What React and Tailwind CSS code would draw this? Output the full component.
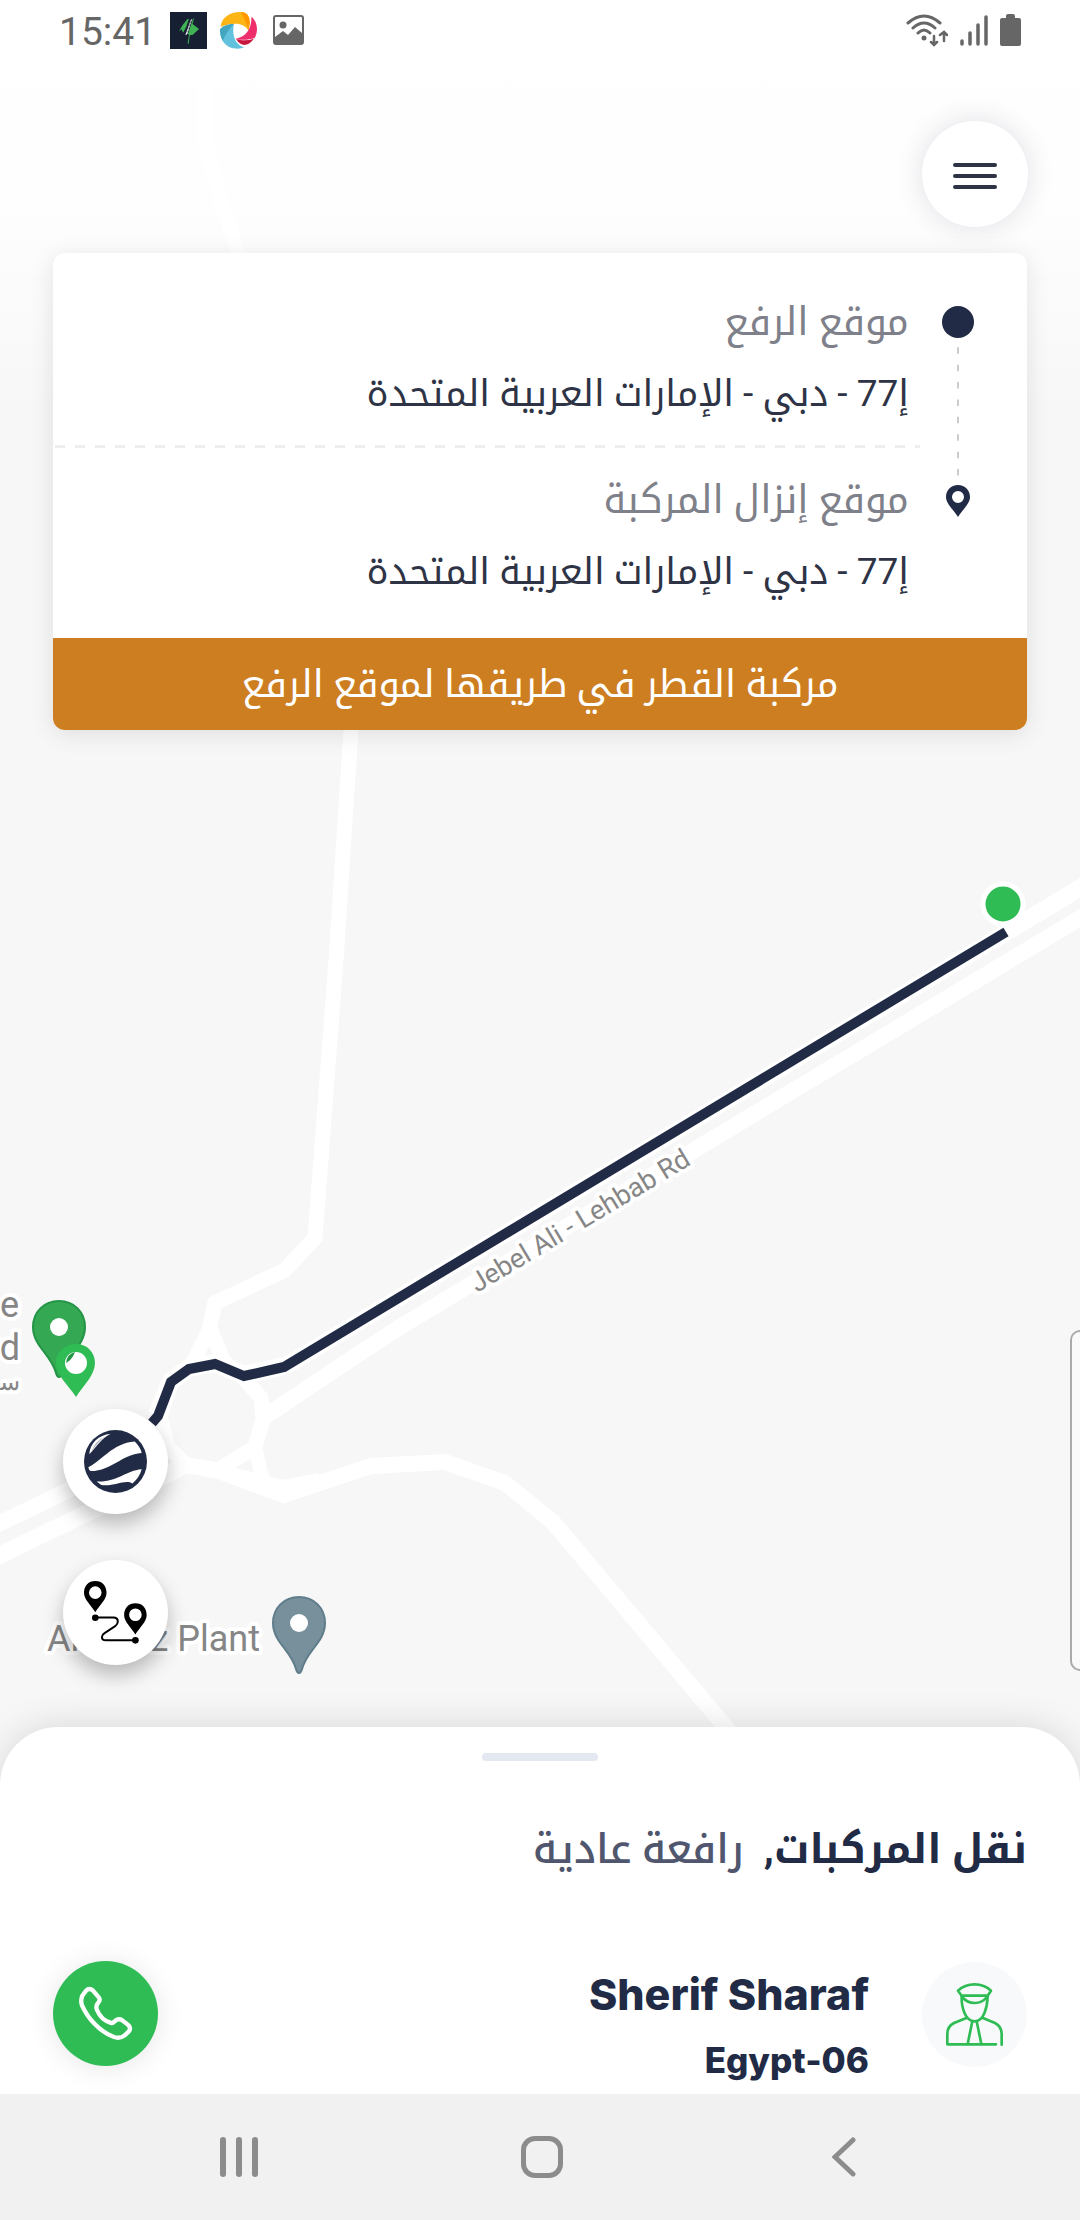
const ADDRESS = 'إ77 - دبي - الإمارات العربية المتحدة';

function MapPin({ x, y, fill, stroke }) {
  return (
    <g transform={`translate(${x} ${y})`}>
      <path
        d="M0 -26 C15 -26 26 -15 26 0 C26 19 8 27 3 46 Q2 50 0 50 Q-2 50 -3 46 C-8 27 -26 19 -26 0 C-26 -15 -15 -26 0 -26 Z"
        fill={fill}
        stroke={stroke}
        strokeWidth="2"
      />
      <circle r="9" fill="#fff" />
    </g>
  );
}

function MapCanvas() {
  return (
    <svg
      className="absolute inset-0 h-full w-full bg-[#f7f7f7] [font-family:Roboto,sans-serif]"
      viewBox="0 0 1080 2094"
      preserveAspectRatio="xMinYMin slice"
      aria-label="Map"
    >
      <g fill="none" stroke="#fff" strokeWidth="15">
        <path d="M204 60 V133 L217 187 L238 253 L345 520 L351 730 L336 960 L315 1238 L285 1270 L215 1303 L209 1330 L190 1368" />
        <path d="M210 1328 L224 1362 L243 1377 L261 1398 L263 1420 L255 1447 L218 1470 L186 1465 L168 1447 L160 1417 L171 1382 L189 1369" />
        <path d="M255 1447 L262 1477" strokeWidth="14" />
        <path d="M180 1464 L219 1471 L284 1495 L371 1466 L445 1462 L505 1483 L553 1522 L740 1744" strokeWidth="16" />
        <path d="M219 1471 L283 1487 L320 1480" strokeWidth="14" />
        <path d="M263 1418 L360 1353 L400 1327 L1090 912" strokeWidth="16" />
        <path d="M1090 882 L284 1367" strokeWidth="17" />
        <path d="M284 1366 L244 1375 L215 1363 L189 1368 L171 1381 L157 1415" strokeWidth="18" />
        <path d="M-6 1526 L67 1491 L150 1442 L162 1425" strokeWidth="16" />
        <path d="M-6 1558 L83 1515 L180 1468 L190 1462" strokeWidth="17" />
      </g>
      <path
        d="M1006 932 L284 1367 L244 1376 L215 1364 L189 1369 L171 1382 L158 1416 L152 1423"
        fill="none"
        stroke="#222b45"
        strokeWidth="10"
      />
      <circle cx="1003" cy="904" r="20" fill="#2fbc54" stroke="#fff" strokeWidth="5" />

      <g fill="#868686" stroke="#fff" strokeWidth="8" strokeLinejoin="round" paintOrder="stroke">
        <text fontSize="27" transform="translate(477 1293) rotate(-31)">
          Jebel Ali - Lehbab Rd
        </text>
        <g fontSize="36">
          <text x="19" y="1317" textAnchor="end">e</text>
          <text x="20" y="1360" textAnchor="end">rd</text>
          <text x="20" y="1390" fontSize="24" textAnchor="end">ﺳ</text>
          <text x="47" y="1651">Al</text>
          <text x="260" y="1651" textAnchor="end">z Plant</text>
        </g>
      </g>

      <MapPin x={59} y={1327} fill="#34a853" stroke="#249447" />
      <MapPin x={299} y={1623} fill="#78909c" stroke="#607d8b" />
      <path
        d="M76 1344 C87 1344 95 1352 95 1363 C95 1375 83 1386 76 1397 C69 1386 56 1375 56 1363 C56 1352 65 1344 76 1344 Z"
        fill="#2fbc54"
      />
      <circle cx="76" cy="1363" r="11" fill="#fff" />
      <path d="M66 1363 Q67 1354 75 1352 Q72 1360 66 1363 Z" fill="#249447" />
    </svg>
  );
}

function StatusBar() {
  return (
    <header className="flex h-16 items-center px-[59px] pb-1 text-[#666]">
      <span className="pt-1 text-[39px] leading-[48px]">15:41</span>
      <div className="ml-[14px] flex items-center gap-[13px]">
        <svg className="h-[37px] w-[37px]" viewBox="0 0 107 111" preserveAspectRatio="none" aria-hidden="true">
          <path d="M0 0H107V111H0Z" fill="#172033" />
          <path d="M55 20 L47 44 L38 62 L33 52 L26 58 L36 40 L50 22 Z M70 18 L65 36 L84 51 L66 68 L57 70 L54 96 L51 94 L55 68 L52 66 L66 22 Z" fill="#3fb354" />
          <path d="M64 20 L50 66 L44 70 L60 24 Z" fill="#fff" />
          <path d="M60 28 L48 62" stroke="#172033" strokeWidth="2" strokeDasharray="5 5" />
        </svg>
        <svg className="h-[37px] w-[37px]" viewBox="0 0 107 111" preserveAspectRatio="none" aria-hidden="true">
          <path d="M2 44 C4 12 40 -6 72 2 C90 10 88 36 82 55 C70 34 44 28 2 44 Z" fill="#fdb515" />
          <path d="M60 0 C90 0 88 36 82 55 C78 34 70 20 60 0 Z" fill="#ff9800" />
          <path d="M91 14 C108 28 112 58 100 78 C84 84 60 86 46 80 C72 76 92 54 91 14 Z" fill="#ee2f6c" />
          <path d="M46 80 C60 104 80 106 98 80 C80 86 62 86 46 80 Z" fill="#c8173f" />
          <path d="M0 52 C10 40 26 36 40 36 C34 70 44 98 70 106 C50 116 0 112 0 52 Z" fill="#62c1dc" />
          <path d="M0 52 C10 40 26 36 40 36 C30 46 20 60 8 86 C2 76 0 64 0 52 Z" fill="#42a6c0" />
        </svg>
        <svg className="ml-[3px] h-[30px] w-[31px]" viewBox="0 0 31 30" aria-hidden="true">
          <rect x="1" y="1" width="29" height="28" rx="2" fill="none" stroke="#666" strokeWidth="2" />
          <circle cx="10" cy="10" r="3.5" fill="#666" />
          <path d="M2 22 L10 16 L15 20 L22 12 L29 18 V29 H2 Z" fill="#666" />
        </svg>
      </div>
      <div className="ml-auto flex items-center gap-3">
        <svg className="h-[33px] w-[42px]" viewBox="0 0 42 33" fill="none" stroke="#666" strokeWidth="3" strokeLinecap="round" aria-hidden="true">
          <path d="M2 9 Q18 -5 34 9 M7 14 Q18 4 29 14 M12 19 Q18 13 24 19" />
          <circle cx="18" cy="24" r="2.5" fill="#666" stroke="none" />
          <path d="M28 22 V30 M25 28 L28 31 L31 28 M38 27 V19 M34 21 L38 18 L41 21" strokeWidth="2.5" />
        </svg>
        <svg className="h-[31px] w-[28px]" viewBox="0 0 28 31" stroke="#666" strokeWidth="3.5" strokeLinecap="round" aria-hidden="true">
          <path d="M2 26 V29 M10 18 V29 M18 10 V29 M26 2 V29" />
        </svg>
        <svg className="h-[32px] w-[21px]" viewBox="0 0 21 32" fill="#666" aria-hidden="true">
          <path d="M6 2 Q6 0 8 0 H13 Q15 0 15 2 V4 H19 Q21 4 21 6 V30 Q21 32 19 32 H2 Q0 32 0 30 V6 Q0 4 2 4 H6 Z" />
        </svg>
      </div>
    </header>
  );
}

function Stop({ label, address }) {
  return (
    <div className="flex flex-col">
      <dt className="text-[39px] leading-[71px] text-[#7f818a]">{label}</dt>
      <dd className="text-[37px] leading-[71px] text-[#2e3445]">{address}</dd>
    </div>
  );
}

function TripCard() {
  return (
    <section dir="rtl" className="mx-[53px] mt-[26px] overflow-hidden rounded-xl bg-white shadow-[0_4px_24px_rgba(0,0,0,0.1)]">
      <div className="flex h-[385px] pt-[34px]">
        <div className="flex w-[107px] flex-col items-center pr-8">
          <span className="mt-[19px] h-8 w-8 rounded-full bg-[#222b45]"></span>
          <svg className="my-2 h-[130px] w-1" viewBox="0 0 4 130" aria-hidden="true">
            <path d="M2 2 V130" stroke="#ccc" strokeWidth="2" strokeDasharray="5 12.4" strokeLinecap="round" />
          </svg>
          <svg className="mt-px h-8 w-6" viewBox="0 0 24 32" aria-hidden="true">
            <path fillRule="evenodd" d="M12 0 C19 0 24 5 24 12 C24 19 16 25 12 32 C8 25 0 19 0 12 C0 5 5 0 12 0 Z M12 6 A6 6 0 1 0 12 18 A6 6 0 1 0 12 6 Z" fill="#222b45" />
          </svg>
        </div>
        <dl className="flex flex-1 flex-col pr-[11px]">
          <Stop label="موقع الرفع" address={ADDRESS} />
          <svg className="-mr-[11px] mt-4 mb-[17px] h-[3px] self-stretch" preserveAspectRatio="none" aria-hidden="true">
            <path d="M2 1.5 H1200" stroke="#eee" strokeWidth="3" strokeDasharray="10 10" />
          </svg>
          <Stop label="موقع إنزال المركبة" address={ADDRESS} />
        </dl>
      </div>
      <p className="bg-[#cd7e20] text-center text-[38px] leading-[92px] text-white">
        مركبة القطر في طريقها لموقع الرفع
      </p>
    </section>
  );
}

function FloatingTools() {
  return (
    <div className="relative flex flex-1 items-end justify-between pb-14">
      <div className="mb-[6px] ml-[63px] flex flex-col gap-[46px]">
        <button aria-label="Map style" className="flex h-[105px] w-[105px] items-center justify-center rounded-full bg-white shadow-[0_10px_20px_rgba(0,0,0,0.26)]">
          <svg className="h-[63px] w-[63px]" viewBox="0 0 190 190" aria-hidden="true">
            <circle cx="95" cy="95" r="95" fill="#222b45" />
            <g fill="#fff">
              <path d="M16 73 C18 40 44 14 80 12 C52 26 42 46 16 73 Z" />
              <path d="M13 112 C52 96 85 40 153 35 Q170 52 174 69 C112 74 86 122 20 124 Q15 122 13 112 Z" />
              <path d="M38 155 C100 158 125 122 174 118 Q168 142 146 161 C122 148 90 172 52 166 Z" />
            </g>
            <path d="M22 66 Q34 32 62 20 Q40 38 22 66 Z" fill="#222b45" opacity="0.35" />
          </svg>
        </button>
        <button aria-label="Show route" className="flex h-[105px] w-[105px] items-center justify-center rounded-full bg-white shadow-[0_10px_20px_rgba(0,0,0,0.26)]">
          <svg className="h-[63px] w-[63px]" viewBox="0 0 190 190" aria-hidden="true">
            <path fillRule="evenodd" d="M34 0 C55 0 68 14 68 36 C68 56 44 76 34 94 C24 76 0 56 0 36 C0 14 14 0 34 0 Z M34 16 A19 19 0 1 0 34 54 A19 19 0 1 0 34 16 Z" />
            <path fillRule="evenodd" d="M155 67 C176 67 189 81 189 103 C189 123 165 143 155 161 C145 143 121 123 121 103 C121 81 135 67 155 67 Z M155 83 A19 19 0 1 0 155 121 A19 19 0 1 0 155 83 Z" />
            <circle cx="34" cy="111" r="10" />
            <circle cx="155" cy="179" r="10" />
            <path d="M34 110 H88 Q102 110 102 122 Q102 130 94 136 L62 157 Q54 162 54 169 Q54 179 66 179 H155" fill="none" stroke="#000" strokeWidth="6" />
          </svg>
        </button>
      </div>
      <div className="h-[341px] w-[10px] rounded-l-[10px] border-2 border-r-0 border-[#aaa] bg-[#fafafa]"></div>
    </div>
  );
}

function DriverSheet() {
  return (
    <section dir="rtl" className="relative flex h-[367px] flex-col rounded-t-[58px] bg-white px-[53px] pt-[26px] shadow-[0_-2px_36px_rgba(0,0,0,0.12)]">
      <span className="h-2 w-[116px] self-center rounded bg-[#e4e8f1]"></span>
      <h1 className="mt-12 flex gap-5 text-[41px] leading-[80px] font-bold text-[#222b45]">
        نقل المركبات,
        <span className="font-medium text-[#50566d]">رافعة عادية</span>
      </h1>
      <div className="mt-[72px] flex items-start">
        <svg className="mt-px h-[105px] w-[105px] rounded-full bg-[#f7f9fb]" viewBox="126 126 315 315" fill="none" stroke="#2fbc54" strokeWidth="8" strokeLinecap="round" strokeLinejoin="round" aria-hidden="true">
          <path d="M234 212 Q254 193 284 193 Q313 193 333 212 L323 227 H245 Z" />
          <path d="M246 231 Q262 249 284 249 Q306 249 321 231" />
          <path d="M245 229 C244 258 254 304 284 304 C313 304 322 258 323 229" />
          <path d="M261 293 L222 309 Q202 319 202 342 V373 H348 M307 293 L345 309 Q365 320 365 342 V374" />
          <path d="M277 304 L263 372 M290 304 L304 372" />
        </svg>
        <div dir="ltr" className="mr-[53px] text-right font-extrabold text-[#222b45] [font-family:Inter,sans-serif]">
          <p className="text-[43px] leading-[66px]">Sherif Sharaf</p>
          <p className="text-[35px] leading-[66px]">Egypt-06</p>
        </div>
        <button aria-label="Call driver" className="mr-auto h-[105px] w-[105px] rounded-full bg-[#2fbc54] shadow-[0_2px_28px_rgba(0,0,0,0.1)]">
          <svg viewBox="159 93 315 315" fill="none" stroke="#fff" strokeWidth="13" strokeLinejoin="round" aria-hidden="true">
            <path d="M258 182 Q268 172 279 182 L297 203 Q302 211 294 219 Q286 228 291 240 C299 259 312 272 331 278 Q338 281 345 273 Q356 264 367 271 L386 286 Q394 296 386 305 L374 316 Q360 327 342 321 C296 304 262 262 246 226 Q241 212 247 197 Z" />
          </svg>
        </button>
      </div>
    </section>
  );
}

function NavigationBar() {
  return (
    <nav className="relative flex h-[126px] items-center justify-between bg-[#f1f1f1] pr-[202px] pl-[205px]">
      <button aria-label="Recent apps" className="flex w-[68px] justify-center gap-[10px]">
        <span className="h-10 w-[6px] rounded-full bg-[#8c8c8c]"></span>
        <span className="h-10 w-[6px] rounded-full bg-[#8c8c8c]"></span>
        <span className="h-10 w-[6px] rounded-full bg-[#8c8c8c]"></span>
      </button>
      <button aria-label="Home" className="h-[42px] w-[42px] rounded-[14px] border-5 border-[#8c8c8c]"></button>
      <button aria-label="Back" className="flex w-[68px] justify-center">
        <svg className="h-10 w-6" viewBox="0 0 24 40" fill="none" stroke="#8c8c8c" strokeWidth="5" strokeLinecap="round" aria-hidden="true">
          <path d="M21 3 L3 20 L21 37" />
        </svg>
      </button>
    </nav>
  );
}

export default function App() {
  return (
    <div className="flex min-h-screen flex-col overflow-hidden [font-family:Roboto,'Noto_Kufi_Arabic','DejaVu_Sans',sans-serif]">
      <main className="relative flex flex-1 flex-col">
        <MapCanvas />
        <div className="absolute inset-x-0 top-0 h-[416px] bg-linear-to-b from-white via-white/85 to-white/0"></div>
        <div className="relative flex flex-1 flex-col">
          <StatusBar />
          <div className="flex justify-end px-[52px] pt-[57px]">
            <button aria-label="Menu" className="flex h-[106px] w-[106px] flex-col items-center justify-center gap-[7px] rounded-full bg-white shadow-[0_0_28px_rgba(34,43,69,0.14)]">
              <span className="mt-1 h-1 w-11 rounded-full bg-[#2e3445]"></span>
              <span className="h-1 w-11 rounded-full bg-[#2e3445]"></span>
              <span className="h-1 w-11 rounded-full bg-[#2e3445]"></span>
            </button>
          </div>
          <TripCard />
          <FloatingTools />
          <DriverSheet />
        </div>
      </main>
      <NavigationBar />
    </div>
  );
}
